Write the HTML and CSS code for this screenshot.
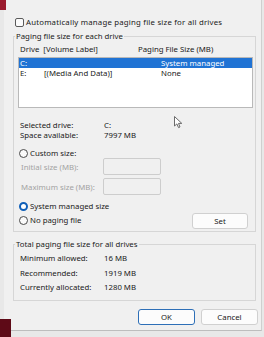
FILE: index.html
```html
<!DOCTYPE html>
<html>
<head>
<meta charset="utf-8">
<link rel="stylesheet" href="styles.css">
</head>
<body>
<div class="desktop">
  <div class="window">
    <label class="check-row"><span class="checkbox"></span><span class="check-text">Automatically manage paging file size for all drives</span></label>

    <fieldset class="group group-drives">
      <legend>Paging file size for each drive</legend>
      <div class="list-head"><span class="col-drive">Drive&nbsp; [Volume Label]</span><span>Paging File Size (MB)</span></div>
      <div class="listbox">
        <div class="row selected"><span class="c1">C:</span><span class="c2"></span><span>System managed</span></div>
        <div class="row"><span class="c1">E:</span><span class="c2">[(Media And Data)]</span><span>None</span></div>
      </div>
      <div class="info">
        <span>Selected drive:</span><span>C:</span>
        <span>Space available:</span><span>7997 MB</span>
      </div>
      <div class="radio-row first"><span class="radio"></span><span>Custom size:</span></div>
      <div class="size-row"><span class="size-label">Initial size (MB):</span><span class="input"></span></div>
      <div class="size-row second"><span class="size-label">Maximum size (MB):</span><span class="input"></span></div>
      <div class="bottom-rows">
        <div class="radios">
          <div class="radio-row"><span class="radio checked"></span><span>System managed size</span></div>
          <div class="radio-row"><span class="radio"></span><span>No paging file</span></div>
        </div>
        <button class="btn set">Set</button>
      </div>
    </fieldset>

    <fieldset class="group group-total">
      <legend>Total paging file size for all drives</legend>
      <div class="totals">
        <span>Minimum allowed:</span><span>16 MB</span>
        <span>Recommended:</span><span>1919 MB</span>
        <span>Currently allocated:</span><span>1280 MB</span>
      </div>
    </fieldset>

    <div class="actions">
      <button class="btn ok">OK</button>
      <button class="btn">Cancel</button>
    </div>
  </div>

  <div class="red red-top"></div>
  <div class="red red-bottom"></div>
  <svg class="cursor" width="9" height="13" viewBox="0 0 9 13"><path d="M0.5 0.5 L0.5 10 L2.9 7.9 L4.5 11.6 L6 11 L4.5 7.4 L7.8 7.4 Z" fill="#fff" stroke="#6a6a6a" stroke-width="1" stroke-linejoin="round"/></svg>
</div>
</body>
</html>
```

FILE: styles.css
```css
* { box-sizing: border-box; }
html, body { margin: 0; padding: 0; }
body {
  width: 264px;
  height: 337px;
  overflow: hidden;
  font-family: "Noto Sans", "Open Sans", sans-serif;
  font-size: 7.8px;
  color: #1a1a1a;
  background: #e6e6e6;
}
.desktop {
  position: relative;
  width: 264px;
  height: 337px;
  background: #e8e8e8;
}
.window {
  position: absolute;
  left: 4px;
  top: 0;
  width: 258px;
  height: 331px;
  background: #f0f0f0;
  border-right: 1px solid #cfcfcf;
  border-bottom: 1px solid #bdbdbd;
  padding: 17px 5px 0 9px;
  display: flex;
  flex-direction: column;
}
.red { position: absolute; left: 0; }
.red-top { top: 0; width: 6px; height: 10px; background: #9b1b2e; }
.red-bottom { top: 319px; width: 11px; height: 18px; background: #5e0a17; }
.cursor { position: absolute; left: 174px; top: 116px; }

.check-row {
  display: flex;
  align-items: center;
  gap: 2px;
  height: 10px;
  line-height: 10px;
  padding-left: 2px;
}
.check-text { letter-spacing: 0.2px; }
.checkbox {
  width: 9px;
  height: 9px;
  border: 1px solid #5a5a5a;
  border-radius: 2px;
  background: #fbfbfb;
}

.group {
  margin: 0;
  padding: 0;
  border: 1px solid #d6d6d6;
  min-width: 0;
}
.group legend {
  margin-left: 1px;
  padding: 0 1px;
  line-height: 10px;
  height: 10px;
}
.group-drives { margin-top: 4px; padding: 0 2px 2px 0; }
.list-head {
  display: flex;
  line-height: 10px;
  margin-top: 3px;
  padding-left: 6px;
}
.col-drive { width: 118px; }
.listbox {
  margin: 3px 0 0 4px;
  height: 51px;
  background: #ffffff;
  border: 1px solid #b9b9b9;
}
.row {
  display: flex;
  height: 10px;
  line-height: 10px;
  padding-left: 1px;
}
.row.selected { background: #2073d4; color: #ffffff; }
.c1 { width: 24px; }
.c2 { width: 117px; }

.info, .totals {
  display: grid;
  grid-template-columns: 84px auto;
  line-height: 10px;
  padding-left: 6px;
}
.info { margin-top: 12px; }

.radio-row {
  display: flex;
  align-items: center;
  gap: 2px;
  height: 10px;
  line-height: 10px;
  padding-left: 5px;
}
.radio-row.first { margin-top: 8px; }
.radio {
  width: 9px;
  height: 9px;
  border: 1px solid #4a4a4a;
  border-radius: 50%;
  background: #fafafa;
}
.radio.checked {
  border: 2.5px solid #0f5fb8;
  background: #ffffff;
}

.size-row {
  display: flex;
  align-items: center;
  height: 17px;
  padding-left: 7px;
  color: #a3a3a3;
}
.size-row.second { margin-top: 3px; }
.size-label { width: 82px; }
.input {
  width: 58px;
  height: 17px;
  border: 1px solid #cdcdcd;
  border-radius: 2px;
  background: #f0f0f0;
}

.bottom-rows {
  display: flex;
  justify-content: space-between;
  margin-top: 6px;
}
.radios { display: flex; flex-direction: column; gap: 4px; }

.btn {
  font: inherit;
  color: #1a1a1a;
  background: #fcfcfc;
  border: 1px solid #d0d0d0;
  border-radius: 3px;
  padding: 0;
  height: 16px;
  line-height: 14px;
}
.set { width: 56px; margin-top: 12px; margin-right: 5px; }

.group-total { margin-top: 7px; padding: 0 3px 8px 0; }
.totals { margin-top: 4px; row-gap: 4.5px; }

.actions {
  display: flex;
  justify-content: flex-end;
  gap: 6px;
  margin-top: 8px;
  margin-right: -2px;
}
.actions .btn { width: 57px; }
.btn.ok { border: 1.5px solid #2d6fb7; }
```
